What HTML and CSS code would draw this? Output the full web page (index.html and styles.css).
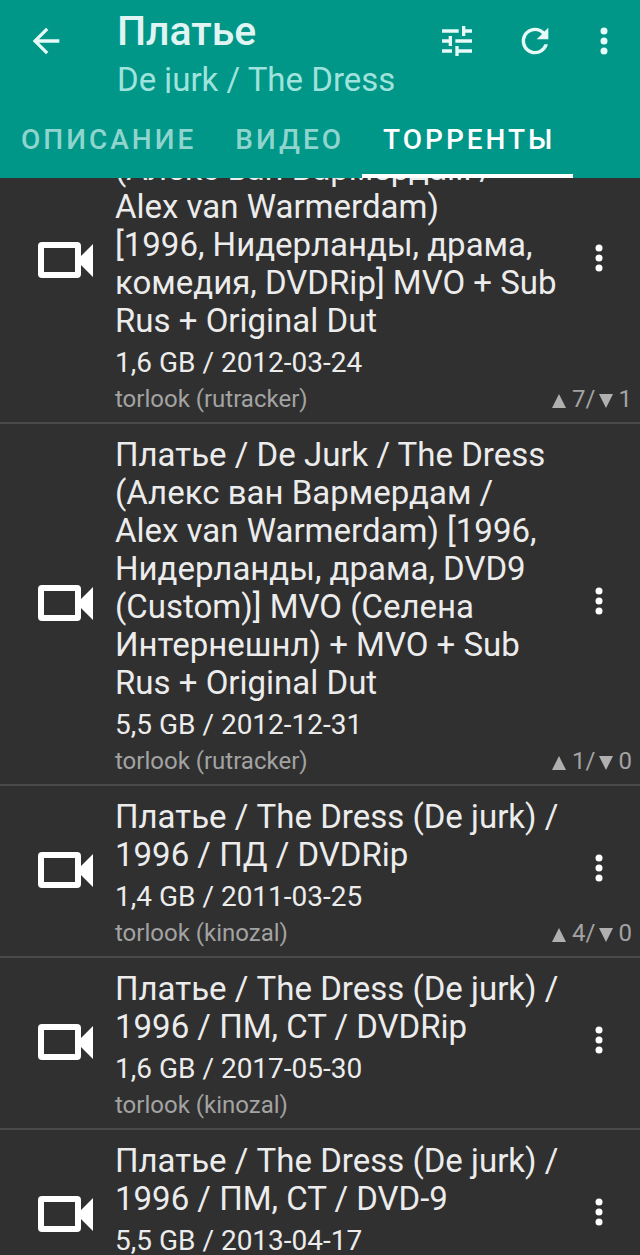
FILE: index.html
```html
<!DOCTYPE html>
<html lang="ru">
<head>
    <meta charset="UTF-8">
    <meta name="viewport" content="width=device-width, initial-scale=1.0">
    <title>Платье</title>
    <link rel="stylesheet" href="styles.css">
</head>
<body>
    <!-- shared icons -->
    <svg class="sprite" aria-hidden="true">
        <symbol id="icon-camera" viewBox="0 0 56 38">
            <path fill-rule="evenodd" d="M4 1H39Q43 1 43 5V15L55 3V36L43 24V33Q43 37 39 37H4Q0 37 0 33V5Q0 1 4 1ZM6 7V31H37V7Z"/>
        </symbol>
        <symbol id="icon-more" viewBox="0 0 8 28">
            <circle cx="4" cy="4" r="3.5"/>
            <circle cx="4" cy="14" r="3.5"/>
            <circle cx="4" cy="24" r="3.5"/>
        </symbol>
    </svg>

    <header class="app-header">
        <div class="toolbar">
            <button class="icon-btn back" type="button" aria-label="Назад">
                <svg width="40" height="40" viewBox="0 0 24 24"><path d="M20 11H7.83l5.59-5.59L12 4l-8 8 8 8 1.41-1.41L7.83 13H20v-2z"/></svg>
            </button>
            <div class="titles">
                <h1>Платье</h1>
                <p>De jurk / The Dress</p>
            </div>
            <div class="actions">
                <button class="icon-btn" type="button" aria-label="Фильтр">
                    <svg width="40" height="40" viewBox="0 0 24 24"><path d="M3 17v2h6v-2H3zM3 5v2h10V5H3zm10 16v-2h8v-2h-8v-2h-2v6h2zM7 9v2H3v2h4v2h2V9H7zm14 4v-2H11v2h10zm-6-4h2V7h4V5h-4V3h-2v6z"/></svg>
                </button>
                <button class="icon-btn" type="button" aria-label="Обновить">
                    <svg width="40" height="40" viewBox="0 0 24 24"><path d="M17.65 6.35A7.96 7.96 0 0 0 12 4a8 8 0 1 0 7.73 10h-2.08A6 6 0 1 1 12 6c1.66 0 3.14.69 4.22 1.78L13 11h7V4l-2.35 2.35z"/></svg>
                </button>
                <button class="icon-btn" type="button" aria-label="Ещё">
                    <svg width="8" height="28"><use href="#icon-more"/></svg>
                </button>
            </div>
        </div>
        <nav class="tabs">
            <a href="#description">ОПИСАНИЕ</a>
            <a href="#video">ВИДЕО</a>
            <a href="#torrents" class="active" aria-current="page">ТОРРЕНТЫ</a>
        </nav>
    </header>

    <main class="content">
        <ul class="torrents">
            <li class="torrent">
                <svg class="kind" width="56" height="38"><use href="#icon-camera"/></svg>
                <div class="info">
                    <h2>Платье / De Jurk / The Dress (Алекс ван Вармердам / Alex van Warmerdam)<br>[1996, Нидерланды, драма, комедия, DVDRip] MVO + Sub Rus + Original Dut</h2>
                    <p class="meta">1,6 GB / 2012-03-24</p>
                </div>
                <div class="source"><span>torlook (rutracker)</span><span class="peers"><i class="up"></i>7/<i class="down"></i>1</span></div>
                <button class="icon-btn more" type="button" aria-label="Меню"><svg width="8" height="28"><use href="#icon-more"/></svg></button>
            </li>
            <li class="torrent">
                <svg class="kind" width="56" height="38"><use href="#icon-camera"/></svg>
                <div class="info">
                    <h2>Платье / De Jurk / The Dress (Алекс ван Вармердам / Alex van Warmerdam) [1996, Нидерланды, драма, DVD9 (Custom)] MVO (Селена Интернешнл) + MVO + Sub Rus + Original Dut</h2>
                    <p class="meta">5,5 GB / 2012-12-31</p>
                </div>
                <div class="source"><span>torlook (rutracker)</span><span class="peers"><i class="up"></i>1/<i class="down"></i>0</span></div>
                <button class="icon-btn more" type="button" aria-label="Меню"><svg width="8" height="28"><use href="#icon-more"/></svg></button>
            </li>
            <li class="torrent">
                <svg class="kind" width="56" height="38"><use href="#icon-camera"/></svg>
                <div class="info">
                    <h2>Платье / The Dress (De jurk) / 1996 / ПД / DVDRip</h2>
                    <p class="meta">1,4 GB / 2011-03-25</p>
                </div>
                <div class="source"><span>torlook (kinozal)</span><span class="peers"><i class="up"></i>4/<i class="down"></i>0</span></div>
                <button class="icon-btn more" type="button" aria-label="Меню"><svg width="8" height="28"><use href="#icon-more"/></svg></button>
            </li>
            <li class="torrent">
                <svg class="kind" width="56" height="38"><use href="#icon-camera"/></svg>
                <div class="info">
                    <h2>Платье / The Dress (De jurk) / 1996 / ПМ, СТ / DVDRip</h2>
                    <p class="meta">1,6 GB / 2017-05-30</p>
                </div>
                <div class="source"><span>torlook (kinozal)</span></div>
                <button class="icon-btn more" type="button" aria-label="Меню"><svg width="8" height="28"><use href="#icon-more"/></svg></button>
            </li>
            <li class="torrent">
                <svg class="kind" width="56" height="38"><use href="#icon-camera"/></svg>
                <div class="info">
                    <h2>Платье / The Dress (De jurk) / 1996 / ПМ, СТ / DVD-9</h2>
                    <p class="meta">5,5 GB / 2013-04-17</p>
                </div>
                <button class="icon-btn more" type="button" aria-label="Меню"><svg width="8" height="28"><use href="#icon-more"/></svg></button>
            </li>
        </ul>
    </main>
</body>
</html>
```
FILE: styles.css
```css
*, *::before, *::after { box-sizing: border-box; }
body { margin: 0; height: 100vh; display: flex; flex-direction: column; overflow: hidden; background-color: #303030; color: #ececec; font-family: Roboto, "Noto Sans", sans-serif; }
h1, h2, p, ul { margin: 0; padding: 0; font-weight: 400; }
svg { display: block; fill: currentColor; }
.sprite { position: absolute; width: 0; height: 0; }

.icon-btn { display: flex; justify-content: center; align-items: center; width: 48px; height: 48px; padding: 0; border: 0; background: none; color: #fff; cursor: pointer; }

/* header */
.app-header { flex: none; background-color: #009688; }
.toolbar { display: flex; height: 100px; padding: 8px 12px 0 22px; }
.toolbar .icon-btn { margin-top: 9px; color: #e6fbf8; }
.titles { flex: 1; min-width: 0; margin-left: 47px; }
.titles h1 { font-size: 41px; line-height: 46px; font-weight: 500; color: #e0f5f3; }
.titles p { height: 31px; margin-top: 8px; font-size: 33px; line-height: 36px; color: #9fe3dc; overflow: hidden; white-space: nowrap; }
.actions { display: flex; gap: 30px; }
.actions .icon-btn:last-child { margin-left: -9px; }

.tabs { display: flex; height: 78px; }
.tabs a { padding: 23px 18px 0 21px; border-bottom: 4px solid transparent; font-size: 28px; line-height: 34px; font-weight: 500; letter-spacing: 3px; color: #8fd5ce; text-decoration: none; }
.tabs a.active { color: #fff; border-bottom-color: #fff; }

/* torrent list, scrolled part of the way down */
.content { flex: 1; min-height: 0; overflow: hidden; }
.torrents { margin-top: -78px; list-style: none; }
.torrent { display: grid; grid-template-columns: 115px 1fr 80px; grid-template-rows: auto 34px; padding: 4px 0 6px; border-bottom: 2px solid #4a4a4a; }
.kind { grid-area: 1 / 1 / 3 / 2; align-self: center; margin-left: 38px; color: #fff; }
.info { grid-area: 1 / 2; padding-top: 8px; }
.info h2 { font-size: 33px; line-height: 38px; }
.meta { margin-top: 4px; font-size: 28px; line-height: 38px; }
.source { grid-area: 2 / 2 / 3 / 4; display: flex; justify-content: space-between; padding-right: 8px; font-size: 24px; line-height: 34px; color: #a3a3a3; }
.more { grid-area: 1 / 3 / 3 / 4; align-self: center; margin: 0 0 4px 15px; }

.peers { display: flex; align-items: center; }
.up, .down { margin: 4px 6px 0 3px; border: 7px solid transparent; }
.up { border-top: 0; border-bottom: 14px solid #b0b0b0; }
.down { border-bottom: 0; border-top: 14px solid #b0b0b0; }
```
